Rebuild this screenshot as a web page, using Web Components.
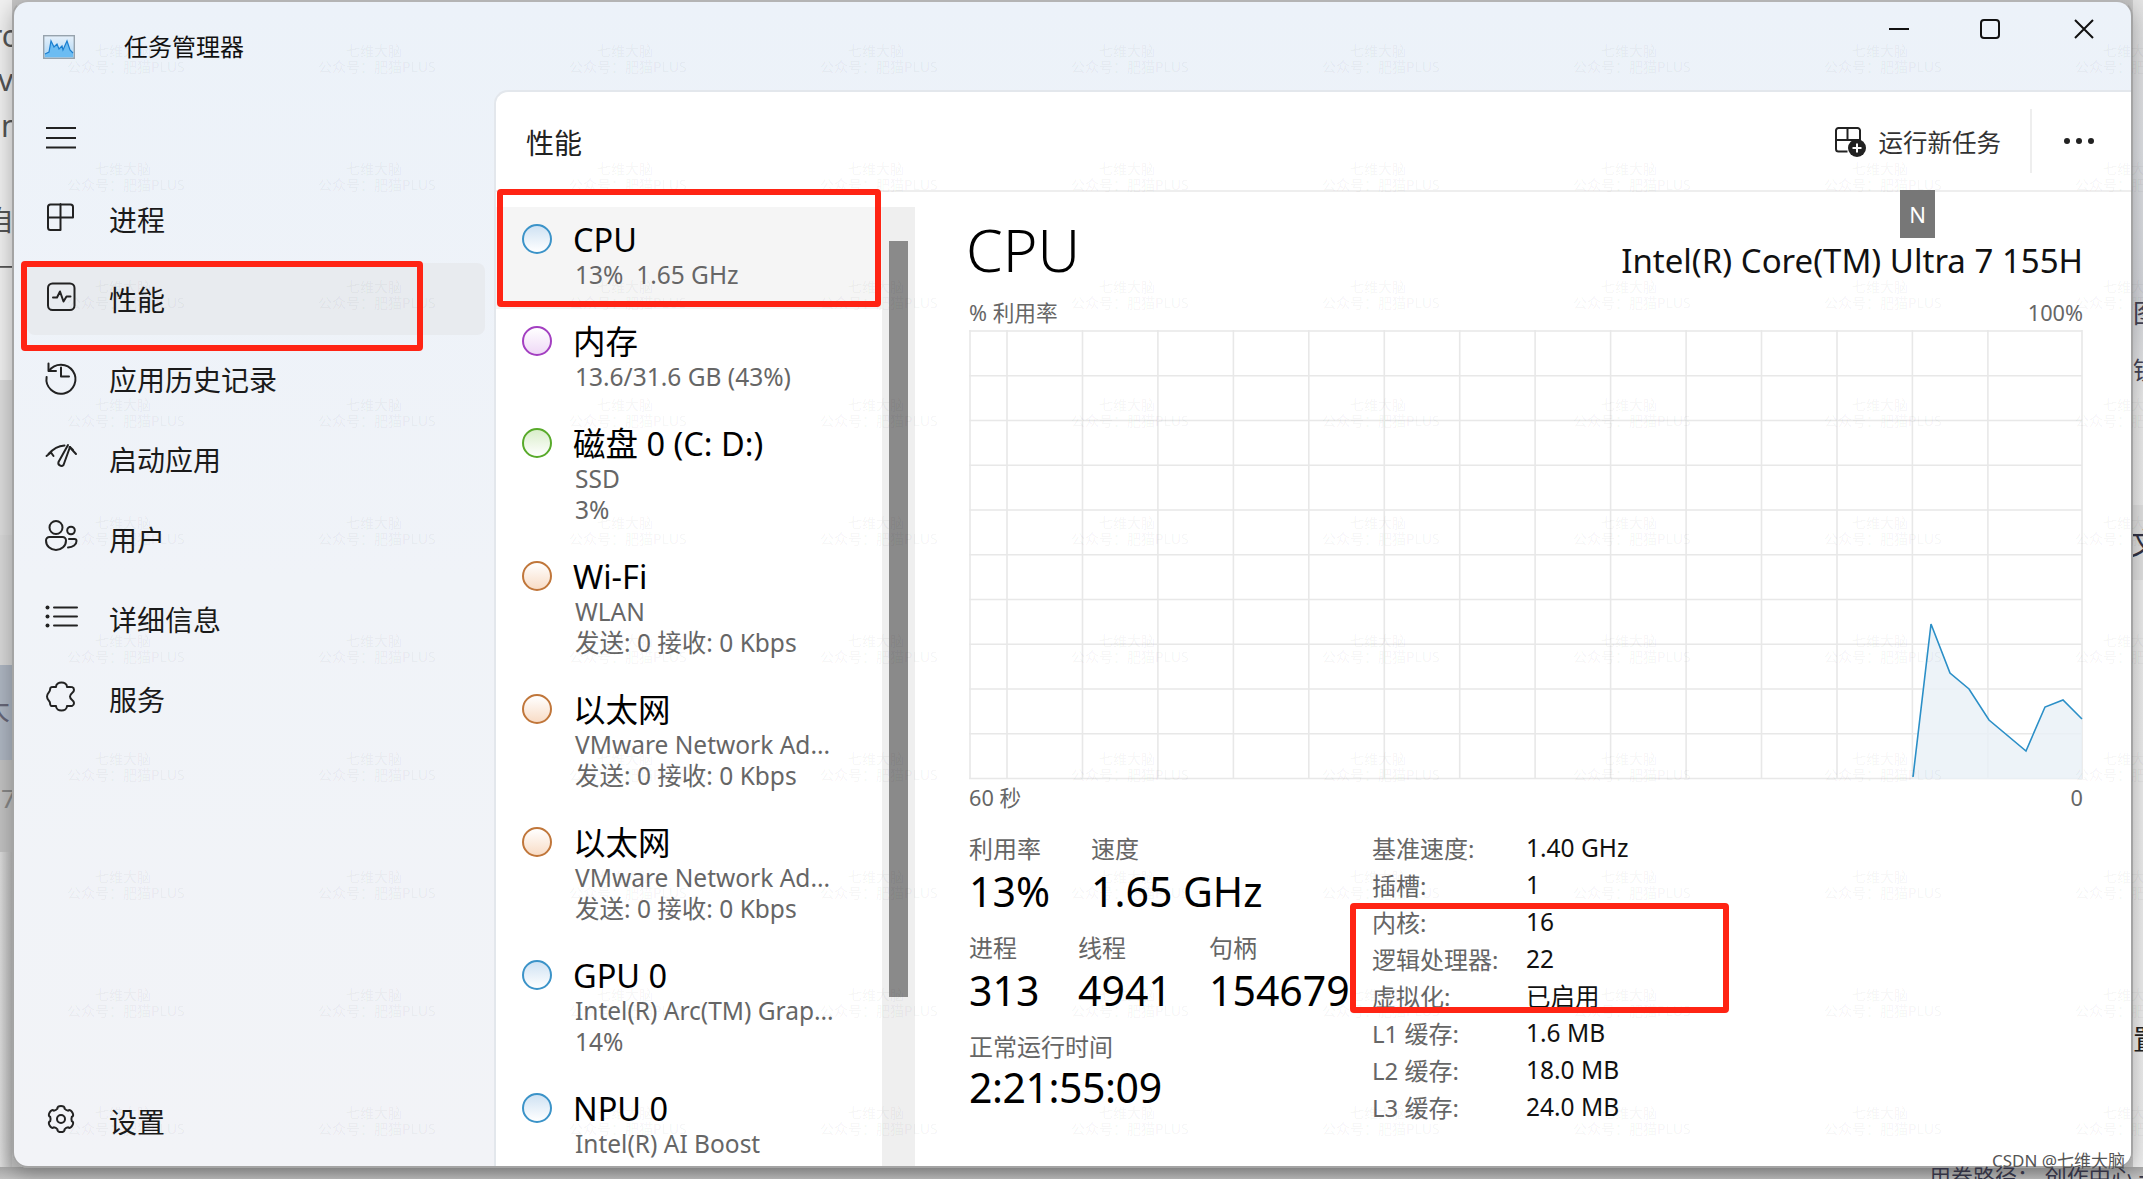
<!doctype html>
<html lang="zh"><head><meta charset="utf-8"><title>任务管理器</title>
<style>
html,body{margin:0;padding:0}
body{position:relative;width:2143px;height:1179px;overflow:hidden;background:#d6d6d6;font-family:"Noto Sans","Noto Sans CJK SC",sans-serif;color:#000}
div[slot],span[slot]{display:block}
</style></head><body>
<tm-backdrop></tm-backdrop>
<tm-window>
  <tm-titlebar slot="title"></tm-titlebar>
  <tm-nav slot="nav">
    <tm-navitem icon="proc">进程</tm-navitem>
    <tm-navitem icon="perf" selected>性能</tm-navitem>
    <tm-navitem icon="hist">应用历史记录</tm-navitem>
    <tm-navitem icon="boot">启动应用</tm-navitem>
    <tm-navitem icon="users">用户</tm-navitem>
    <tm-navitem icon="list">详细信息</tm-navitem>
    <tm-navitem icon="svc">服务</tm-navitem>
    <tm-navitem icon="gear" slot="bottom">设置</tm-navitem>
  </tm-nav>
  <tm-main slot="main">
    <tm-header slot="header"></tm-header>
    <tm-list slot="list">
      <perf-row color="blue" selected><span slot="t">CPU</span><div>13%&nbsp; 1.65 GHz</div></perf-row>
      <perf-row color="purple"><span slot="t">内存</span><div>13.6/31.6 GB (43%)</div></perf-row>
      <perf-row color="green"><span slot="t">磁盘 0 (C: D:)</span><div>SSD</div><div>3%</div></perf-row>
      <perf-row color="orange"><span slot="t">Wi-Fi</span><div>WLAN</div><div>发送: 0 接收: 0 Kbps</div></perf-row>
      <perf-row color="orange"><span slot="t">以太网</span><div>VMware Network Ad...</div><div>发送: 0 接收: 0 Kbps</div></perf-row>
      <perf-row color="orange"><span slot="t">以太网</span><div>VMware Network Ad...</div><div>发送: 0 接收: 0 Kbps</div></perf-row>
      <perf-row color="blue"><span slot="t">GPU 0</span><div>Intel(R) Arc(TM) Grap...</div><div>14%</div></perf-row>
      <perf-row color="blue"><span slot="t">NPU 0</span><div>Intel(R) AI Boost</div><div>0%</div></perf-row>
    </tm-list>
    <tm-detail slot="detail"></tm-detail>
  </tm-main>
</tm-window>
<tm-watermark></tm-watermark>
<red-box style="--x:21px;--y:261px;--w:402px;--h:90px"></red-box>
<red-box style="--x:497px;--y:189px;--w:384px;--h:118px"></red-box>
<red-box style="--x:1350px;--y:903px;--w:379px;--h:110px"></red-box>
<tm-tip>N</tm-tip>
<csdn-mark>CSDN @七维大脑</csdn-mark>

<script>
const FONT='"Noto Sans","Noto Sans CJK SC",sans-serif';
function def(name,css,html,init){
  customElements.define(name,class extends HTMLElement{
    constructor(){super();const r=this.attachShadow({mode:'open'});
      r.innerHTML='<style>'+css+'</style>'+(typeof html==='function'?html(this):html);}
    connectedCallback(){ if(init&&!this._i){this._i=1;init(this)} }
  });
}
function gearPath(){
  let d='',n=6,c=16,ro=14.2,ri=10.6;
  for(let i=0;i<n;i++){
    const a=i*Math.PI*2/n-Math.PI/2,w=Math.PI/n;
    const p=(r,t)=>(c+r*Math.cos(t)).toFixed(1)+' '+(c+r*Math.sin(t)).toFixed(1);
    d+=(i?'':'M'+p(ri+.4,a-w*.62))+' C'+p(ro+.6,a-w*.62)+' '+p(ro+.6,a+w*.62)+' '+p(ri+.4,a+w*.62)+' Q'+p(ri-.6,a+w)+' '+p(ri+.4,a+w*1.38);
  }
  return d+'Z';
}
const IC={
 proc:'<path d="M3 16.5H15.5M15.5 3V29M15.5 16.5H28V6a2.5 2.5 0 0 0-2.5-2.5H5.5A2.5 2.5 0 0 0 3 6V26.5A2.5 2.5 0 0 0 5.5 29H15.5"/>',
 perf:'<rect x="3" y="3.5" width="26.5" height="26.5" rx="4.5"/><path d="M8 17.5h4l3-6 3.5 10 3-5h4"/>',
 hist:'<path d="M3.5 4.5v7.5h7.5"/><path d="M4 12A14.5 14.5 0 1 1 1.6 18"/><path d="M16 8.5V17.5h8"/>',
 boot:'<path d="M1.5 14 6 10.5 8.5 14M3.5 12C8 7 13 4 19.5 3.5M24.5 5 31 12M25.5 5.5 28 8"/><path d="M23 3 13.5 20a3 3 0 0 0 5 3L25 5"/>',
 users:'<circle cx="11" cy="8.5" r="6.5"/><path d="M4.5 18H17.5A3.5 3.5 0 0 1 21 21.5C21 27 16.5 31 11 31S1 27 1 21.5A3.5 3.5 0 0 1 4.5 18Z"/><circle cx="26" cy="11.5" r="3.8"/><path d="M24 20H29.5A2 2 0 0 1 31.5 22C31.5 25.5 28 28.5 23 28.5"/>',
 list:'<path d="M9 3.5H32M9 12.5H32M9 21.5H32"/><g fill="#222" stroke="none"><circle cx="2.5" cy="3.5" r="2"/><circle cx="2.5" cy="12.5" r="2"/><circle cx="2.5" cy="21.5" r="2"/></g>',
 svc:'<path d="M11 7C11 1 22 1 22 7C25 7 29 6 29 10C29 13 25 13 25 16.5C25 20 29 20 29 23C29 27 25 26 22 26C22 32 11 32 11 26C7 26 5 27 5 23C5 21 2 20 2 16.5C2 13 5 12 5 10C5 6 8 7 11 7Z"/>',
 gear:'<path d="'+gearPath()+'"/><circle cx="16" cy="16" r="4"/>'
};
const ICY={proc:-2,perf:-3,hist:-4,boot:-1,users:-4,list:1,svc:-3,gear:-2};

def('tm-backdrop',`
:host{position:absolute;inset:0;display:block;overflow:hidden;background:linear-gradient(90deg,#dcdcdc,#c6c6c6 12px,#c6c6c6 2130px,#dedede);font-family:${FONT};color:#555}
.b{position:absolute;display:block}
.t{position:absolute;white-space:nowrap;line-height:1}
`,`
<i class="b" style="left:0;top:0;width:12px;height:380px;background:#f0f0f0"></i>
<i class="b" style="left:0;top:380px;width:12px;height:155px;background:#dcdcdc;border-bottom:2px solid #c4c4c4"></i>
<i class="b" style="left:0;top:535px;width:12px;height:130px;background:#d8d8d8"></i>
<i class="b" style="left:0;top:665px;width:12px;height:95px;background:#aeb6c2"></i>
<i class="b" style="left:0;top:760px;width:12px;height:92px;background:#c2c2c2"></i>
<i class="b" style="left:0;top:852px;width:12px;height:327px;background:linear-gradient(90deg,#dcdcdc,#bdbdbd)"></i>
<span class="t" style="left:-10px;top:21px;font-size:30px">rc</span>
<span class="t" style="left:-2px;top:65px;font-size:30px">v</span>
<span class="t" style="left:1px;top:111px;font-size:30px">n</span>
<span class="t" style="left:-14px;top:206px;font-size:28px">自</span>
<span class="t" style="left:-6px;top:258px;font-size:20px">一术</span>
<span class="t" style="left:-18px;top:695px;font-size:28px;color:#667">大</span>
<span class="t" style="left:1px;top:785px;font-size:26px;color:#888">7</span>
<i class="b" style="left:2133px;top:0;width:10px;height:1179px;background:linear-gradient(180deg,#e3e3e3,#dfe1e5 150px,#d6d8dd 300px,#ececec 400px,#f0f0f0 1179px)"></i>
<i class="b" style="left:2133px;top:505px;width:10px;height:75px;background:#e2e2e2"></i>
<span class="t" style="left:2133px;top:300px;font-size:26px;color:#445">图</span>
<span class="t" style="left:2133px;top:358px;font-size:24px;color:#445">锁</span>
<span class="t" style="left:2130px;top:528px;font-size:30px;color:#334">文</span>
<span class="t" style="left:2133px;top:1025px;font-size:28px;color:#222">置</span>
<i class="b" style="left:0;top:1167px;width:2143px;height:12px;background:linear-gradient(#a8a8a8,#c2c2c2)"></i>
<span class="t" style="left:1929px;top:1165px;font-size:22px;color:#334;z-index:2">用券路径： 创作中心 一</span>
`);

def('tm-window',`
:host{position:relative;z-index:1;display:grid;box-sizing:border-box;width:2121px;height:1168px;margin:0 0 0 12px;grid-template-columns:480px 1fr;grid-template-rows:88px 1fr;border:2px solid #a4a4a4;border-top-color:#b4b4b4;border-radius:16px;overflow:hidden;background:linear-gradient(180deg,#ecf2f9,#f0f3f8 50%,#f2f3f7);box-shadow:0 6px 22px rgba(0,0,0,.3)}
::slotted([slot=title]){grid-column:1/3}
`,`<slot name="title"></slot><slot name="nav"></slot><slot name="main"></slot>`);

def('tm-titlebar',`
:host{display:flex;align-items:center;height:88px;font-family:${FONT};position:relative}
.app{width:32px;height:24px;margin-left:29px;margin-top:2px}
.t{margin-left:49px;font-size:24px;line-height:32px;margin-top:2px;color:#111;flex:1}
.c{display:block;flex:none}
svg.c{stroke:#111;stroke-width:2;fill:none}
.ctl{display:flex;align-items:flex-start;height:88px;padding-right:36px}
`,`
<svg class="app" viewBox="0 0 32 24"><defs><linearGradient id="g" x1="0" y1="0" x2="0" y2="1"><stop offset="0" stop-color="#e6f0fa"/><stop offset="1" stop-color="#a9d5f5"/></linearGradient></defs>
<rect x=".7" y=".7" width="30.6" height="22.6" fill="url(#g)" stroke="#97a3ad" stroke-width="1.4"/>
<path d="M2 19 6 17 8 6 11 12 14 9 16 14 19 11 20 15 24 6 27 15 30 18V22H2Z" fill="#6cbcf2"/>
<path d="M2 19 6 17 8 6 11 12 14 9 16 14 19 11 20 15 24 6 27 15 30 18" fill="none" stroke="#1b7fd0" stroke-width="1.2"/></svg>
<div class="t">任务管理器</div>
<div class="ctl">
<svg class="c" width="22" height="88" style="margin-right:69px"><path d="M1 27H21"/></svg>
<svg class="c" width="22" height="88" style="margin-right:72px"><rect x="2" y="18" width="18" height="18" rx="3"/></svg>
<svg class="c" width="22" height="88"><path d="M2 18 20 36M20 18 2 36" /></svg>
</div>`);

def('tm-nav',`
:host{display:flex;flex-direction:column;box-sizing:border-box;padding:0 9px 0 13px;font-family:${FONT}}
.h{height:93px;flex:none;display:block}
.h svg{display:block;margin:37px 0 0 18px}
.m{display:flex;flex-direction:column;gap:8px;flex:1}
.b{padding-bottom:9px}
`,`<div class="h"><svg width="32" height="22" fill="none" stroke="#222" stroke-width="2"><path d="M1 1H31M1 11H31M1 20.5H31"/></svg></div>
<div class="m"><slot></slot></div><div class="b"><slot name="bottom"></slot></div>`);

def('tm-navitem',`
:host{display:flex;align-items:center;height:72px;border-radius:8px;font-size:28px;color:#1a1a1a;flex:none}
:host([selected]){background:#e8ebef}
svg{flex:none;margin:0 32px 0 18px;fill:none;stroke:#222;stroke-width:2;stroke-linecap:round;stroke-linejoin:round;overflow:visible}
`,el=>`<svg width="32" height="32" viewBox="0 0 32 32" style="transform:translateY(${ICY[el.getAttribute('icon')]}px)">${IC[el.getAttribute('icon')]}</svg><slot></slot>`);

def('tm-main',`
:host{display:grid;grid-template-columns:386px 33px 1fr;grid-template-rows:100px 1fr;background:#fff;border-left:2px solid #e3e7ec;border-top:2px solid #e3e7ec;border-top-left-radius:14px;overflow:hidden;min-height:0;font-family:${FONT}}
::slotted([slot=header]){grid-column:1/4}
::slotted([slot=detail]){grid-column:3}
.track{background:#efefef;margin-top:15px;padding:34px 7px 0}
.thumb{height:756px;background:#8a8a8a}
`,`<slot name="header"></slot><slot name="list"></slot><div class="track"><div class="thumb"></div></div><slot name="detail"></slot>`);

def('tm-header',`
:host{display:flex;align-items:center;box-sizing:border-box;height:100px;border-bottom:2px solid #eee;padding:0 37px 0 30px;font-family:${FONT}}
.t{font-size:28px;flex:1;color:#222;margin-top:2px}
.r{display:flex;align-items:center;font-size:24.5px;color:#333}
.r svg{margin-right:13px;fill:none;stroke:#222;stroke-width:2}
.s{width:2px;height:64px;background:#eee;margin:0 32px 0 29px}
.d{display:flex;gap:6px;margin-right:0}
.d i{display:block;width:6px;height:6px;border-radius:50%;background:#222}
`,`<div class="t">性能</div>
<div class="r"><svg width="32" height="32" viewBox="0 0 32 32"><path d="M2 15H15M13.5 3V15M13.5 26.5H4.5A2.5 2.5 0 0 1 2 24V5.5A2.5 2.5 0 0 1 4.5 3H23.5A2.5 2.5 0 0 1 26 5.5V15H13.5"/><circle cx="23" cy="23" r="9" fill="#222" stroke="none"/><path d="M23 18.5V27.5M18.5 23H27.5" stroke="#fff"/></svg>运行新任务</div>
<div class="s"></div><div class="d"><i></i><i></i><i></i></div>`);

def('tm-list',`
:host{display:block;padding-top:15px;overflow:hidden;min-height:0;font-family:${FONT}}
`,`<slot></slot>`);

const C={blue:['#3b93c8','#cfe2f3','#fff'],purple:['#a33fc1','#fff','#efd9f6'],green:['#58aa2a','#d9eeca','#fff'],orange:['#c0763a','#fff','#f8dcc6']};
def('perf-row',`
:host{display:grid;grid-template-columns:77px 1fr;box-sizing:border-box;padding:14px 0 19px;font-family:${FONT}}
:host([selected]){background:#f5f5f5}
.o{box-sizing:border-box;width:30px;height:30px;border-radius:50%;border:2px solid;margin:3px 0 0 26px}
.t{font-size:32.5px;line-height:38px;color:#000;white-space:nowrap}
.s{font-size:24.5px;line-height:31px;color:#666;white-space:nowrap;padding-left:2px}
`,el=>{const c=C[el.getAttribute('color')];return `<div class="o" style="border-color:${c[0]};background:linear-gradient(${c[1]},${c[2]})"></div><div><div class="t"><slot name="t"></slot></div><div class="s"><slot></slot></div></div>`});

let v='';for(let i=0;i<15;i++){const x=i===0?1:38+75.45*(i-1);v+=`M${x.toFixed(1)} 0V449`}v+='M1113 0V449';
let hh='';for(let i=0;i<=10;i++){hh+=`M0 ${(1+44.75*i).toFixed(1)}H1113`}
const tbl=[['基准速度:','1.40 GHz'],['插槽:','1'],['内核:','16'],['逻辑处理器:','22'],['虚拟化:','已启用'],['L1 缓存:','1.6 MB'],['L2 缓存:','18.0 MB'],['L3 缓存:','24.0 MB']];
def('tm-detail',`
:host{display:block;box-sizing:border-box;padding:0 48px 0 54px;font-family:${FONT};min-width:0;overflow:hidden}
.top{display:flex;justify-content:space-between;align-items:flex-end;height:104px;box-sizing:border-box;padding-bottom:12px}
.cpu{font-size:59px;line-height:70px;font-weight:350;margin-left:-3px;color:#000}
.model{font-size:33px;line-height:44px;color:#111;margin-bottom:1px}
.lb{display:flex;justify-content:space-between;font-size:21.7px;color:#666;line-height:32px}
.lb.a{height:33px;margin-top:1px}
.lb.b{height:26px;margin-top:5px;line-height:26px}
svg{display:block}
.st{display:flex;margin-top:18px}
.l{width:403px;flex:none;padding-top:4px}
.r1{display:flex}
.lab{font-size:24px;line-height:31px;color:#666;white-space:nowrap}
.val{font-size:41px;line-height:52px;color:#000;white-space:nowrap;margin-top:1px}
.row{margin-bottom:15px}
.tb{display:grid;grid-template-columns:154px 1fr;grid-auto-rows:37px;align-items:center;font-size:24.5px;color:#111}
.tb .k{color:#666;white-space:nowrap;font-size:24px}
`,`
<div class="top"><div class="cpu">CPU</div><div class="model">Intel(R) Core(TM) Ultra 7 155H</div></div>
<div class="lb a"><span>% 利用率</span><span>100%</span></div>
<svg width="1114" height="450" viewBox="0 0 1114 450">
  <path d="${v}${hh}" fill="none" stroke="#e8e8e8" stroke-width="1.6"/>
  <path d="M944 447 962 294 981 343 1000 359 1020 390 1057 421 1076 377 1094 370 1113 389V449H944Z" fill="#e9f0f6" fill-opacity=".8"/>
  <path d="M944 447 962 294 981 343 1000 359 1020 390 1057 421 1076 377 1094 370 1113 389" fill="none" stroke="#2b8fc7" stroke-width="1.6"/>
</svg>
<div class="lb b"><span>60 秒</span><span>0</span></div>
<div class="st">
 <div class="l">
  <div class="r1 row">
   <div style="width:122px"><div class="lab">利用率</div><div class="val">13%</div></div>
   <div><div class="lab">速度</div><div class="val">1.65 GHz</div></div>
  </div>
  <div class="r1 row">
   <div style="width:109px"><div class="lab">进程</div><div class="val">313</div></div>
   <div style="width:131px"><div class="lab">线程</div><div class="val">4941</div></div>
   <div><div class="lab">句柄</div><div class="val">154679</div></div>
  </div>
  <div><div class="lab">正常运行时间</div><div class="val" style="letter-spacing:-.45px;margin-top:-1px">2:21:55:09</div></div>
 </div>
 <div class="tb">${tbl.map(r=>`<div class="k">${r[0]}</div><div>${r[1]}</div>`).join('')}</div>
</div>`);

def('tm-watermark',`
:host{position:absolute;inset:0;z-index:5;display:grid;grid-template-columns:repeat(9,251px);grid-auto-rows:118px;padding:43px 0 0 67px;overflow:hidden;pointer-events:none;font-family:${FONT};font-size:14px;line-height:16px;color:rgba(0,0,0,.05);box-sizing:border-box}
div{width:118px;white-space:nowrap}
b{display:block;font-weight:400;margin-left:28px}
`,()=>{let s='';for(let i=0;i<90;i++)s+='<div><b>七维大脑</b>公众号：肥猫PLUS</div>';return s});

def('red-box',`
:host{position:absolute;z-index:6;left:var(--x);top:var(--y);width:var(--w);height:var(--h);box-sizing:border-box;border:6px solid #ff2414;border-radius:4px;pointer-events:none}
`,'');

def('tm-tip',`
:host{position:absolute;z-index:7;left:1900px;top:190px;width:35px;height:48px;display:flex;align-items:center;justify-content:center;background:#777;color:#fff;font-family:${FONT};font-size:22px}
`,'<slot></slot>');

def('csdn-mark',`
:host{position:absolute;z-index:8;left:1992px;top:1150px;font-family:${FONT};font-size:17px;line-height:22px;color:#555;white-space:nowrap}
`,'<slot></slot>');
</script>
</body></html>
